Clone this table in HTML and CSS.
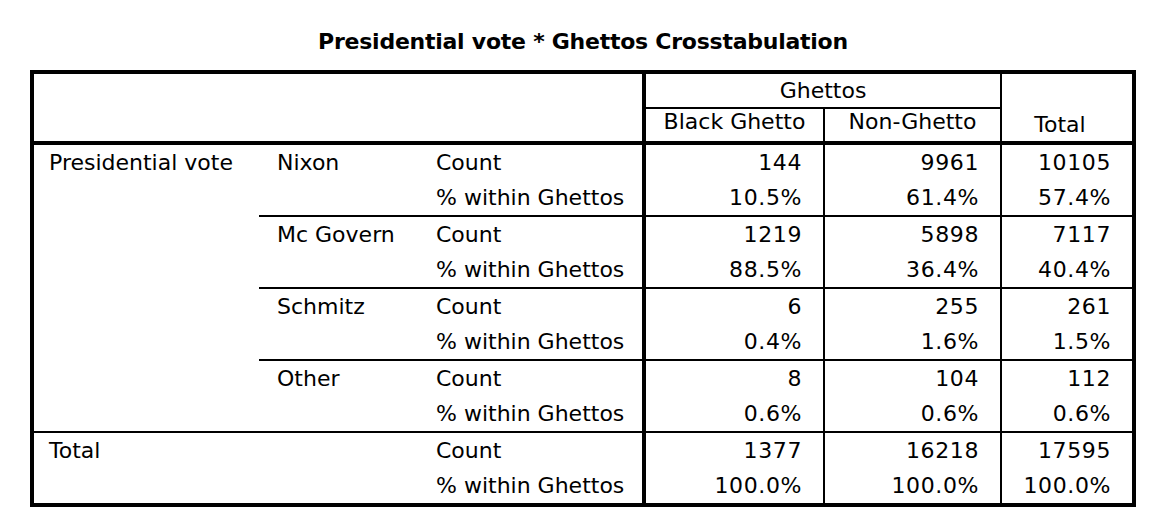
FILE: index.html
```html
<!DOCTYPE html>
<html lang="en">
<head>
<meta charset="utf-8">
<title>Presidential vote * Ghettos Crosstabulation</title>
<link rel="stylesheet" href="styles.css">
</head>
<body>
<div class="page">
  <h1 class="title">Presidential vote * Ghettos Crosstabulation</h1>
  <div class="xtab">
    <div class="cell corner"></div>
    <div class="cell ghettos">Ghettos</div>
    <div class="cell total-head">Total</div>
    <div class="cell sub sub-b">Black Ghetto</div>
    <div class="cell sub sub-n">Non-Ghetto</div>

    <div class="cell var">Presidential vote</div>

    <div class="cell cand g1">Nixon</div>
    <div class="cell stat r1">Count</div>
    <div class="cell num vb r1">144</div>
    <div class="cell num vn r1">9961</div>
    <div class="cell num vt r1">10105</div>
    <div class="cell stat r2 sep">% within Ghettos</div>
    <div class="cell num vb r2 sep">10.5%</div>
    <div class="cell num vn r2 sep">61.4%</div>
    <div class="cell num vt r2 sep">57.4%</div>

    <div class="cell cand g2">Mc Govern</div>
    <div class="cell stat r3">Count</div>
    <div class="cell num vb r3">1219</div>
    <div class="cell num vn r3">5898</div>
    <div class="cell num vt r3">7117</div>
    <div class="cell stat r4 sep">% within Ghettos</div>
    <div class="cell num vb r4 sep">88.5%</div>
    <div class="cell num vn r4 sep">36.4%</div>
    <div class="cell num vt r4 sep">40.4%</div>

    <div class="cell cand g3">Schmitz</div>
    <div class="cell stat r5">Count</div>
    <div class="cell num vb r5">6</div>
    <div class="cell num vn r5">255</div>
    <div class="cell num vt r5">261</div>
    <div class="cell stat r6 sep">% within Ghettos</div>
    <div class="cell num vb r6 sep">0.4%</div>
    <div class="cell num vn r6 sep">1.6%</div>
    <div class="cell num vt r6 sep">1.5%</div>

    <div class="cell cand g4">Other</div>
    <div class="cell stat r7">Count</div>
    <div class="cell num vb r7">8</div>
    <div class="cell num vn r7">104</div>
    <div class="cell num vt r7">112</div>
    <div class="cell stat r8 sep">% within Ghettos</div>
    <div class="cell num vb r8 sep">0.6%</div>
    <div class="cell num vn r8 sep">0.6%</div>
    <div class="cell num vt r8 sep">0.6%</div>

    <div class="cell total-label">Total</div>
    <div class="cell stat r9">Count</div>
    <div class="cell num vb r9">1377</div>
    <div class="cell num vn r9">16218</div>
    <div class="cell num vt r9">17595</div>
    <div class="cell stat r10">% within Ghettos</div>
    <div class="cell num vb r10">100.0%</div>
    <div class="cell num vn r10">100.0%</div>
    <div class="cell num vt r10">100.0%</div>
  </div>
</div>
</body>
</html>
```

FILE: styles.css
```css
* {
  box-sizing: border-box;
}

html, body {
  margin: 0;
  padding: 0;
  background: #ffffff;
}

body {
  font-family: "DejaVu Sans", "Liberation Sans", sans-serif;
  font-size: 22px;
  color: #000000;
}

.page {
  width: 1106px;
  margin-left: 30px;
  padding-top: 29px;
}

.title {
  margin: 0 0 15px 0;
  font-size: 22px;
  line-height: 26px;
  font-weight: bold;
  text-align: center;
  letter-spacing: -0.25px;
}

.xtab {
  display: grid;
  width: 1106px;
  border: 4px solid #000;
  grid-template-columns: 225px 161px 226px 179px 177px 130px;
  grid-template-rows: 35px 36px 35px 37px 35px 37px 35px 37px 35px 37px 35px 35px;
}

.cell {
  white-space: nowrap;
  line-height: 35px;
  min-width: 0;
}

/* header */
.corner {
  grid-column: 1 / 4;
  grid-row: 1 / 3;
  border-right: 4px solid #000;
  border-bottom: 4px solid #000;
}

.ghettos {
  grid-column: 4 / 6;
  grid-row: 1;
  border-right: 2px solid #000;
  border-bottom: 2px solid #000;
  text-align: center;
  line-height: 33px;
}

.total-head {
  grid-column: 6;
  grid-row: 1 / 3;
  border-bottom: 4px solid #000;
  display: flex;
  align-items: flex-end;
  justify-content: center;
  padding-right: 14px;
  padding-bottom: 3px;
  line-height: 26px;
}

.sub {
  grid-row: 2;
  text-align: center;
  line-height: 26px;
  border-right: 2px solid #000;
  border-bottom: 4px solid #000;
}

.sub-b { grid-column: 4; }
.sub-n { grid-column: 5; }

/* row labels */
.var {
  grid-column: 1;
  grid-row: 3 / 11;
  padding-left: 15px;
  border-bottom: 2px solid #000;
}

.cand {
  grid-column: 2;
  padding-left: 18px;
  border-bottom: 2px solid #000;
}

.g1 { grid-row: 3 / 5; }
.g2 { grid-row: 5 / 7; }
.g3 { grid-row: 7 / 9; }
.g4 { grid-row: 9 / 11; }

.total-label {
  grid-column: 1 / 3;
  grid-row: 11 / 13;
  padding-left: 15px;
}

.stat {
  grid-column: 3;
  padding-left: 16px;
  border-right: 4px solid #000;
}

.num {
  text-align: right;
  padding-right: 21px;
  letter-spacing: 0.6px;
}

.vb { grid-column: 4; border-right: 2px solid #000; }
.vn { grid-column: 5; border-right: 2px solid #000; }
.vt { grid-column: 6; }

.sep {
  border-bottom: 2px solid #000;
}

.r1 { grid-row: 3; }
.r2 { grid-row: 4; }
.r3 { grid-row: 5; }
.r4 { grid-row: 6; }
.r5 { grid-row: 7; }
.r6 { grid-row: 8; }
.r7 { grid-row: 9; }
.r8 { grid-row: 10; }
.r9 { grid-row: 11; }
.r10 { grid-row: 12; }
```
